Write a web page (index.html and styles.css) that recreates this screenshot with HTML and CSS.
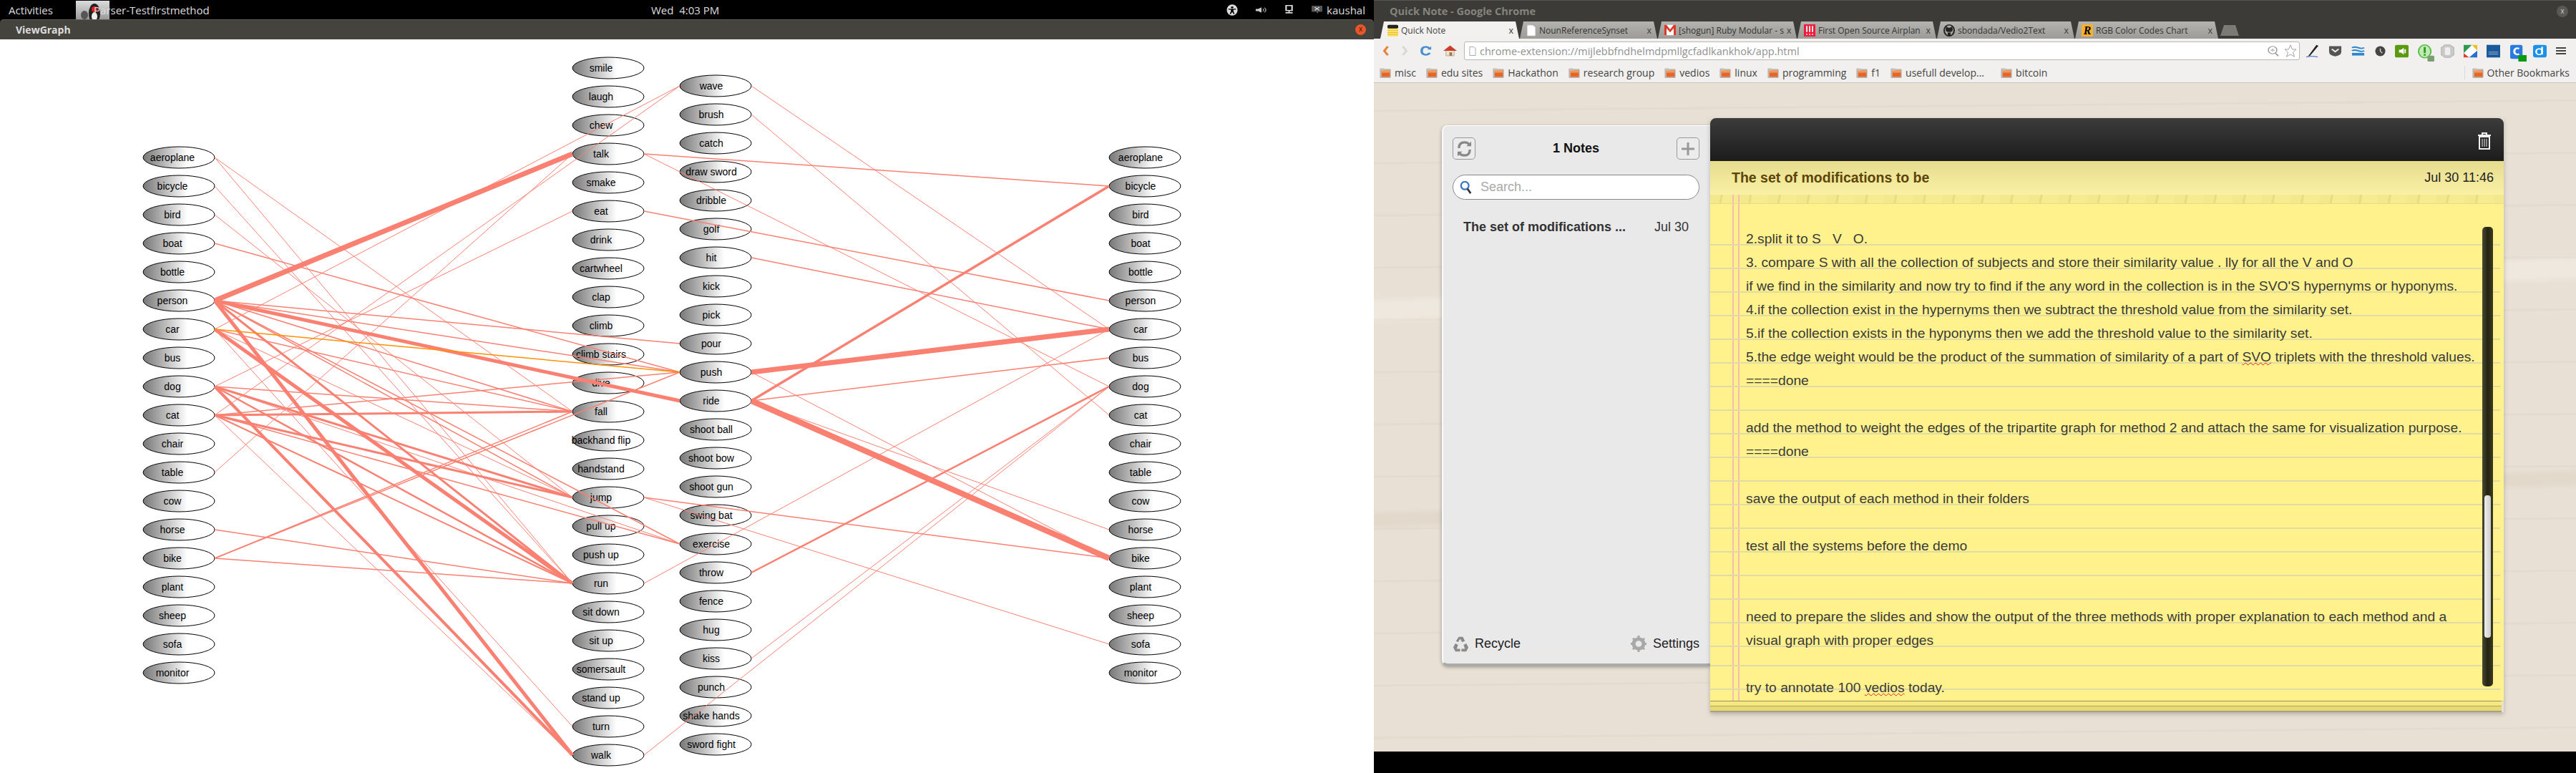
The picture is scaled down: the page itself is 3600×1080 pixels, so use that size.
FILE: index.html
```html
<!DOCTYPE html>
<html lang="en">
<head>
    <meta charset="UTF-8">
    <title>ViewGraph and Quick Note</title>
    <link rel="stylesheet" href="styles.css">
</head>
<body>
    <svg class="defs" width="0" height="0">
        <symbol id="folder" viewBox="0 0 16 20" preserveAspectRatio="none">
            <path d="M1 3h5l1 1h8v15H1z" fill="#d8d5cf" stroke="#999"/>
            <rect x="2.500" y="6" width="12" height="12" fill="#e2682a"/>
            <rect x="2.500" y="6" width="12" height="4" fill="#f09a60"/>
        </symbol>
    </svg>

    <div class="screen-left">
        <div class="top-panel">
            <span class="activities">Activities</span>
            <span class="app-icon">
                <svg width="47" height="26" viewBox="0 0 47 26">
                    <ellipse cx="26" cy="18" rx="8" ry="14" fill="#222"/>
                    <circle cx="26" cy="12" r="4" fill="#e02020"/>
                    <ellipse cx="12" cy="20" rx="5" ry="6" fill="#555"/>
                    <ellipse cx="26" cy="22" rx="4" ry="6" fill="#eee"/>
                </svg>
            </span>
            <span class="app-name">Parser-Testfirstmethod</span>
            <span class="clock">Wed&nbsp; 4:03 PM</span>
            <div class="tray">
                <svg width="16" height="16" viewBox="0 0 18 26" preserveAspectRatio="none">
                    <ellipse cx="9" cy="13" rx="8.500" ry="12.500" fill="#ddd"/>
                    <circle cx="9" cy="7" r="2" fill="#000"/>
                    <path d="M3 10h12v2h-4v4l2 6h-2l-2-5-2 5H5l2-6v-4H3z" fill="#000"/>
                </svg>
                <svg width="16" height="12" viewBox="0 0 18 26" preserveAspectRatio="none">
                    <path d="M1 10h4l5-5v16l-5-5H1z" fill="#ccc"/>
                    <path d="M12 9q3 4 0 8M14.500 6q5 7 0 14" stroke="#aaa" stroke-width="1.500" fill="none"/>
                </svg>
                <svg width="15" height="15" viewBox="0 0 18 26" preserveAspectRatio="none">
                    <rect x="4" y="3" width="10" height="12" fill="none" stroke="#ddd" stroke-width="2.500"/>
                    <rect x="8" y="15" width="2" height="5" fill="#ddd"/>
                    <rect x="3" y="19" width="12" height="3" fill="#ddd"/>
                </svg>
                <svg class="tray-chat" width="15" height="13" viewBox="0 0 14 26" preserveAspectRatio="none">
                    <path d="M0 2h14v17H9l-1 5-2-5H0z" fill="#555"/>
                    <path d="M4 6l6 9M10 6l-6 9" stroke="#ddd" stroke-width="1.500"/>
                </svg>
                <span class="user">kaushal</span>
            </div>
        </div>
        <div class="win-bar">
            <span class="win-title">ViewGraph</span>
            <span class="win-close">x</span>
        </div>
        <svg id="graph" class="graph" width="1920" height="1025" viewBox="0 55 1920 1025">
            <defs>
                <linearGradient id="nodeFill" x1="0" y1="0" x2="1" y2="0">
                    <stop offset="0" stop-color="#777"/>
                    <stop offset="0.62" stop-color="#fff"/>
                </linearGradient>
            </defs>
        </svg>
    </div>

    <div class="screen-right">
        <div class="browser">
            <div class="chrome-title">
                <span>Quick Note - Google Chrome</span>
                <span class="chrome-close">x</span>
            </div>
            <div class="tabs">
                <div class="tab tab-active tab-w1">
                    <svg width="15" height="17" viewBox="0 0 14 24" preserveAspectRatio="none">
                        <rect y="1" width="14" height="23" rx="2" fill="#fbe26a"/>
                        <rect y="1" width="14" height="7" rx="2" fill="#222"/>
                        <path d="M0 12h14M0 16h14M0 20h14" stroke="#e0b020"/>
                    </svg>
                    <span class="tab-name">Quick Note</span><span class="tab-x">x</span>
                </div>
                <div class="tab tab-w2">
                    <svg width="14" height="17" viewBox="0 0 14 22" preserveAspectRatio="none">
                        <path d="M1 1h8l4 4v16H1z" fill="#fff" stroke="#aaa"/>
                    </svg>
                    <span class="tab-name">NounReferenceSynset</span><span class="tab-x">x</span>
                </div>
                <div class="tab tab-w3">
                    <svg width="16" height="16" viewBox="0 0 16 20" preserveAspectRatio="none">
                        <rect y="1" width="16" height="18" fill="#fff"/>
                        <path d="M0 1h3l5 8 5-8h3v18h-3V7l-5 7-5-7v12H0z" fill="#d93a2b"/>
                    </svg>
                    <span class="tab-name">[shogun] Ruby Modular - s</span><span class="tab-x">x</span>
                </div>
                <div class="tab tab-w3">
                    <svg width="16" height="17" viewBox="0 0 16 22" preserveAspectRatio="none">
                        <rect width="16" height="22" fill="#ee1c3a"/>
                        <path d="M4 3v11M8 3v11M12 3v11M4 17v2M8 17v2M12 17v2" stroke="#fff" stroke-width="1.800"/>
                    </svg>
                    <span class="tab-name">First Open Source Airplan</span><span class="tab-x">x</span>
                </div>
                <div class="tab tab-w4">
                    <svg width="16" height="17" viewBox="0 0 16 22" preserveAspectRatio="none">
                        <ellipse cx="8" cy="11" rx="7" ry="10" fill="none" stroke="#222" stroke-width="2"/>
                        <path d="M3 9l1-5 3 2h2l3-2 1 5q0 5-5 5t-5-5zM6 15v6h4v-6z" fill="#222"/>
                    </svg>
                    <span class="tab-name">sbondada/Vedio2Text</span><span class="tab-x">x</span>
                </div>
                <div class="tab tab-w5">
                    <span class="fav-r">R</span>
                    <span class="tab-name">RGB Color Codes Chart</span><span class="tab-x">x</span>
                </div>
                <div class="tab tab-new"></div>
            </div>
            <div class="toolbar">
                <div class="nav-icons">
                    <svg width="10" height="16" viewBox="0 0 12 26" preserveAspectRatio="none">
                        <path d="M9 3L3 13l6 10" fill="none" stroke="#e8823a" stroke-width="4"/>
                    </svg>
                    <svg width="10" height="16" viewBox="0 0 12 26" preserveAspectRatio="none">
                        <path d="M3 3l6 10-6 10" fill="none" stroke="#d8d8d4" stroke-width="4"/>
                    </svg>
                    <svg width="16" height="16" viewBox="0 0 18 26" preserveAspectRatio="none">
                        <path d="M15 8Q12 4 9 4 2 4 2 13t7 9q3 0 6-4" fill="none" stroke="#4a90d0" stroke-width="4"/>
                        <path d="M11 10h6V3z" fill="#4a90d0"/>
                    </svg>
                    <svg width="19" height="18" viewBox="0 0 20 26" preserveAspectRatio="none">
                        <path d="M4 12h12v11H4z" fill="#eee4d0" stroke="#a98"/>
                        <path d="M0 13L10 2l10 11z" fill="#c8402a"/>
                        <rect x="9" y="16" width="4" height="7" fill="#a9744a"/>
                    </svg>
                </div>
                <div class="omnibox">
                    <svg width="10" height="15" viewBox="0 0 11 20" preserveAspectRatio="none">
                        <path d="M1 2h6l3 3v13H1z" fill="#fff" stroke="#999"/>
                    </svg>
                    <span class="url">chrome-extension://mijlebbfndhelmdpmllgcfadlkankhok/app.html</span>
                    <svg class="omni-zoom" width="16" height="15" viewBox="0 0 16 20" preserveAspectRatio="none">
                        <ellipse cx="7" cy="8" rx="6" ry="7" fill="none" stroke="#999" stroke-width="1.500"/>
                        <path d="M7 5v6M4 8h6" stroke="#999"/>
                        <path d="M11 14l4 5" stroke="#999" stroke-width="2"/>
                    </svg>
                    <svg width="18" height="18" viewBox="0 0 18 22" preserveAspectRatio="none">
                        <path d="M9 1l2.500 7.500H17l-4.500 5 2 7.500L9 17l-5.500 4 2-7.500L1 8.500h5.500z" fill="#fff" stroke="#999"/>
                    </svg>
                </div>
                <div class="ext-icons">
                    <svg width="19" height="19" viewBox="0 0 20 28" preserveAspectRatio="none">
                        <path d="M16 1L5 22l-2 4 4-3L19 3z" fill="#222"/>
                        <path d="M1 26q8-3 17 0" stroke="#5a7fd0" stroke-width="2" fill="none"/>
                    </svg>
                    <svg width="19" height="18" viewBox="0 0 20 28" preserveAspectRatio="none">
                        <path d="M1 4h18v12q0 8-9 10-9-2-9-10z" fill="#555"/>
                        <path d="M5 10l5 6 5-6" fill="none" stroke="#eee" stroke-width="2.500"/>
                    </svg>
                    <svg width="19" height="17" viewBox="0 0 20 28" preserveAspectRatio="none">
                        <path d="M1 6q4-3 9 0t9 0M1 13q4-3 9 0t9 0" fill="none" stroke="#2a86d0" stroke-width="3"/>
                        <rect x="1" y="18" width="18" height="6" fill="#2a86d0"/>
                    </svg>
                    <svg width="15" height="15" viewBox="0 0 16 28" preserveAspectRatio="none">
                        <ellipse cx="8" cy="14" rx="7.500" ry="13" fill="#444"/>
                        <path d="M8 7v7l3 5" stroke="#ddd" stroke-width="1.500" fill="none"/>
                    </svg>
                    <svg width="19" height="19" viewBox="0 0 20 28" preserveAspectRatio="none">
                        <rect y="1" width="20" height="26" rx="3" fill="#5a9a10"/>
                        <path d="M6 11h3l4-4v14l-4-4H6z" fill="#fff"/>
                        <path d="M15 10v8" stroke="#fff" stroke-width="2"/>
                    </svg>
                    <svg class="ext-badged" width="23" height="24" viewBox="0 0 24 32" preserveAspectRatio="none">
                        <ellipse cx="10" cy="13" rx="9" ry="12" fill="#bfeab0" stroke="#58b848" stroke-width="2"/>
                        <rect x="8.500" y="5" width="3" height="11" fill="#2f9a30"/>
                        <rect x="8.500" y="18" width="3" height="3" fill="#2f9a30"/>
                        <rect x="14" y="21" width="10" height="11" rx="2" fill="#7aa070"/>
                    </svg>
                    <svg width="19" height="19" viewBox="0 0 20 28" preserveAspectRatio="none">
                        <path d="M6 1h8l6 6v14l-6 6H6l-6-6V7z" fill="#c8c8c8" stroke="#aaa"/>
                        <rect x="6" y="6" width="8" height="16" rx="3" fill="#eee"/>
                    </svg>
                    <svg width="19" height="19" viewBox="0 0 20 28" preserveAspectRatio="none">
                        <rect y="1" width="20" height="26" fill="#fff"/>
                        <path d="M0 1h12L0 18z" fill="#2c9a50"/>
                        <path d="M12 1h8v12z" fill="#f0c020"/>
                        <path d="M0 27V18l8 9z" fill="#e04030"/>
                        <path d="M20 27H8l12-14z" fill="#2a6fd0"/>
                    </svg>
                    <svg width="19" height="19" viewBox="0 0 20 28" preserveAspectRatio="none">
                        <rect y="1" width="20" height="26" fill="#1a5a9a"/>
                        <path d="M3 16h14M3 20h14" stroke="#fff" stroke-opacity="0.700"/>
                    </svg>
                    <svg class="ext-badged" width="23" height="24" viewBox="0 0 24 32" preserveAspectRatio="none">
                        <rect y="1" width="18" height="26" rx="3" fill="#2a7ae0"/>
                        <path d="M13 8q-4-2-6 1-2 4 0 8 3 3 6 1" fill="none" stroke="#fff" stroke-width="3"/>
                        <rect x="12" y="20" width="12" height="12" fill="#0a9a10"/>
                    </svg>
                    <svg width="19" height="19" viewBox="0 0 20 28" preserveAspectRatio="none">
                        <rect y="1" width="20" height="26" rx="4" fill="#1a90e8"/>
                        <ellipse cx="9" cy="15" rx="4.500" ry="6" fill="none" stroke="#fff" stroke-width="2.500"/>
                        <rect x="12" y="5" width="2.500" height="16" fill="#fff"/>
                    </svg>
                    <svg class="ext-menu" width="14" height="14" viewBox="0 0 14 28" preserveAspectRatio="none">
                        <path d="M0 6h14M0 14h14M0 22h14" stroke="#444" stroke-width="4"/>
                    </svg>
                </div>
            </div>
            <div class="bookmarks">
                <span class="mark"><svg width="16" height="15"><use href="#folder"/></svg>misc</span>
                <span class="mark"><svg width="16" height="15"><use href="#folder"/></svg>edu sites</span>
                <span class="mark"><svg width="16" height="15"><use href="#folder"/></svg>Hackathon</span>
                <span class="mark"><svg width="16" height="15"><use href="#folder"/></svg>research group</span>
                <span class="mark"><svg width="16" height="15"><use href="#folder"/></svg>vedios</span>
                <span class="mark"><svg width="16" height="15"><use href="#folder"/></svg>linux</span>
                <span class="mark"><svg width="16" height="15"><use href="#folder"/></svg>programming</span>
                <span class="mark"><svg width="16" height="15"><use href="#folder"/></svg>f1</span>
                <span class="mark mark-long"><svg width="16" height="15"><use href="#folder"/></svg>usefull develop...</span>
                <span class="mark"><svg width="16" height="15"><use href="#folder"/></svg>bitcoin</span>
                <span class="mark mark-other"><svg width="16" height="15"><use href="#folder"/></svg>Other Bookmarks</span>
            </div>
            <div class="stage">
                <div class="sidebar">
                    <div class="side-head">
                        <span class="side-btn">
                            <svg width="21" height="24" viewBox="0 0 22 26" preserveAspectRatio="none">
                                <path d="M3 12q0-9 8-9 5 0 8 4M19 14q0 9-8 9-5 0-8-4" fill="none" stroke="#888" stroke-width="3.500"/>
                                <path d="M21 2v7h-7zM1 24v-7h7z" fill="#888"/>
                            </svg>
                        </span>
                        <span class="side-title">1 Notes</span>
                        <span class="side-btn">
                            <svg width="20" height="20" viewBox="0 0 20 20">
                                <path d="M10 1v18M1 10h18" stroke="#999" stroke-width="3"/>
                            </svg>
                        </span>
                    </div>
                    <div class="search">
                        <svg width="18" height="18" viewBox="0 0 20 20">
                            <ellipse cx="8" cy="7" rx="6" ry="6" fill="#fff" stroke="#3a78c0" stroke-width="2.500"/>
                            <path d="M12 12l5 7" stroke="#333" stroke-width="3"/>
                        </svg>
                        <span>Search...</span>
                    </div>
                    <div class="note-item">
                        <span class="note-name">The set of modifications ...</span>
                        <span>Jul 30</span>
                    </div>
                    <div class="side-foot">
                        <span class="foot-link">
                            <svg width="23" height="24" viewBox="0 0 24 26" preserveAspectRatio="none">
                                <path d="M9 2h6l3 6-4 2-3-5-3 5-3-2zM1 18l3-6 4 2-2 6h5v4H4zM23 18l-3-6-4 2 2 6h-5v4h7z" fill="#8a8a8a"/>
                            </svg>
                            Recycle
                        </span>
                        <span class="foot-link">
                            <svg width="24" height="25" viewBox="0 0 24 26" preserveAspectRatio="none">
                                <circle cx="12" cy="13" r="7" fill="none" stroke="#a8a8a8" stroke-width="5"/>
                                <path d="M12 1v5M12 20v5M1 13h5M18 13h5M4 5l4 4M16 17l4 4M20 5l-4 4M8 17l-4 4" stroke="#a8a8a8" stroke-width="3"/>
                            </svg>
                            Settings
                        </span>
                    </div>
                </div>
                <div class="note">
                    <div class="leather">
                        <svg width="20" height="24" viewBox="0 0 20 24">
                            <path d="M7 3V1h6v2M1 4h18M3 6h14v17H3z" fill="none" stroke="#eee" stroke-width="2"/>
                            <path d="M7 9v11M10 9v11M13 9v11" stroke="#eee"/>
                        </svg>
                    </div>
                    <div class="note-head">
                        <span class="note-title">The set of modifications to be</span>
                        <span class="note-date">Jul 30 11:46</span>
                    </div>
                    <div class="torn"></div>
                    <div class="sheet">
                        <div class="line">2.split it to S   V   O.</div>
                        <div class="line">3. compare S with all the collection of subjects and store their similarity value . lly for all the V and O</div>
                        <div class="line">if we find in the similarity and now try to find if the any word in the collection is in the SVO'S hypernyms or hyponyms.</div>
                        <div class="line">4.if the collection exist in the hypernyms then we subtract the threshold value from the similarity set.</div>
                        <div class="line">5.if the collection exists in the hyponyms then we add the threshold value to the similarity set.</div>
                        <div class="line">5.the edge weight would be the product of the summation of similarity of a part of <span class="typo">SVO</span> triplets with the threshold values.</div>
                        <div class="line">====done</div>
                        <div class="line"></div>
                        <div class="line">add the method to weight the edges of the tripartite graph for method 2 and attach the same for visualization purpose.</div>
                        <div class="line">====done</div>
                        <div class="line"></div>
                        <div class="line">save the output of each method in their folders</div>
                        <div class="line"></div>
                        <div class="line">test all the systems before the demo</div>
                        <div class="line"></div>
                        <div class="line"></div>
                        <div class="line">need to prepare the slides and show the output of the three methods with proper explanation to each method and a</div>
                        <div class="line">visual graph with proper edges</div>
                        <div class="line"></div>
                        <div class="line">try to annotate 100 <span class="typo">vedios</span> today.</div>
                        <div class="scroll-track"><div class="scroll-thumb"></div></div>
                    </div>
                    <div class="stack"></div>
                    <div class="stack stack-low"></div>
                </div>
            </div>
        </div>
    </div>
    <script src="graph.js"></script>
</body>
</html>
```

FILE: styles.css
```css
body {
    margin: 0;
    width: 3600px;
    height: 1080px;
    display: flex;
    overflow: hidden;
    background: #000;
    font-family: "Liberation Sans", Arial, sans-serif;
}
.defs {
    position: absolute;
}
.screen-left {
    width: 1920px;
    flex: none;
    display: flex;
    flex-direction: column;
}
.top-panel {
    height: 27px;
    background: #000;
    color: #ddd;
    font: 15px "Open Sans", sans-serif;
    display: flex;
    align-items: center;
    padding-left: 12px;
}
.activities {
    width: 94px;
}
.app-icon {
    width: 47px;
    height: 26px;
    background: linear-gradient(#ddd, #999);
}
.app-name {
    margin-left: -22px;
    width: 167px;
    position: relative;
    white-space: nowrap;
}
.clock {
    margin-left: 612px;
    white-space: nowrap;
}
.tray {
    margin-left: auto;
    display: flex;
    align-items: center;
    gap: 24px;
    padding-right: 12px;
}
.tray-chat {
    margin-right: -18px;
}
.win-bar {
    height: 28px;
    box-sizing: border-box;
    background: #44433e;
    border-top: 1px solid #5e5d56;
    border-radius: 5px 5px 0 0;
    color: #ddd;
    font: bold 14px "Open Sans", sans-serif;
    display: flex;
    align-items: center;
    justify-content: space-between;
    padding: 0 11px 0 22px;
}
.win-close {
    width: 15px;
    height: 15px;
    border-radius: 50%;
    background: #e8562a;
    color: #4a1808;
    font: 10px/14px "Liberation Sans", sans-serif;
    text-align: center;
}
.graph {
    display: block;
    background: #fff;
}
.graph ellipse {
    fill: url(#nodeFill);
    stroke: #000;
    stroke-width: 1;
}
.graph text {
    font: 14px "Liberation Sans", sans-serif;
    fill: #000;
    text-anchor: middle;
}
.graph line {
    stroke: #fa8072;
}
.graph line.hot {
    stroke: #ff9000;
}

.screen-right {
    width: 1680px;
    flex: none;
    height: 1050px;
}
.browser {
    height: 100%;
    display: flex;
    flex-direction: column;
}
.chrome-title {
    height: 30px;
    background: #3c3b37;
    border-top: 1px solid #55544f;
    box-sizing: border-box;
    color: #85847e;
    font: bold 14.500px "Open Sans", sans-serif;
    display: flex;
    align-items: center;
    justify-content: space-between;
    padding: 0 11px 0 22px;
}
.chrome-close {
    width: 16px;
    height: 16px;
    border-radius: 50%;
    background: #5a5955;
    color: #ccc;
    font: 10px/15px "Liberation Sans", sans-serif;
    text-align: center;
}
.tabs {
    height: 24px;
    background: #3c3b37;
    display: flex;
    padding-left: 9px;
    font: 12px "Open Sans", sans-serif;
    color: #333;
}
.tab {
    box-sizing: border-box;
    height: 24px;
    margin-right: 1px;
    padding: 0 8px 0 9px;
    display: flex;
    align-items: center;
    gap: 4px;
    background: linear-gradient(#b4b3af, #9c9b97);
    clip-path: polygon(5px 0, calc(100% - 5px) 0, 100% 100%, 0 100%);
    white-space: nowrap;
}
.tab svg {
    flex: none;
}
.tab-w1 { width: 194px; padding-left: 10px; }
.tab-w2 { width: 192px; }
.tab-w3 { width: 194px; }
.tab-w4 { width: 192px; }
.tab-w5 { width: 200px; }
.tab-active {
    background: #f2f1f0;
    color: #444;
}
.tab-name {
    flex: 1;
}
.tab-x {
    font: 13px "Liberation Sans", sans-serif;
    color: #444;
}
.tab-new {
    width: 26px;
    height: 15px;
    margin: 5px 0 0 2px;
    padding: 0;
    background: #7b7a75;
}
.fav-r {
    width: 16px;
    height: 17px;
    background: #f8b030;
    color: #000;
    font: italic bold 16px/17px "Liberation Serif", serif;
    text-align: center;
}
.toolbar {
    height: 34px;
    background: #f1f0ee;
    display: flex;
    align-items: center;
}
.nav-icons {
    width: 126px;
    flex: none;
    display: flex;
    align-items: center;
    justify-content: space-between;
    padding: 0 10px 0 12px;
    box-sizing: border-box;
}
.omnibox {
    width: 1168px;
    height: 26px;
    flex: none;
    box-sizing: border-box;
    background: #fff;
    border: 1px solid #b8b7b3;
    border-radius: 3px;
    display: flex;
    align-items: center;
    gap: 5px;
    padding: 0 3px 0 6px;
}
.url {
    color: #909090;
    font: 14.500px "Open Sans", sans-serif;
    flex: 1;
    white-space: nowrap;
}
.omni-zoom {
    margin-right: 2px;
}
.ext-icons {
    flex: 1;
    display: flex;
    align-items: center;
    justify-content: space-between;
    padding: 0 14px 0 8px;
}
.ext-badged {
    margin-right: -4px;
    margin-top: 5px;
}
.bookmarks {
    height: 28px;
    box-sizing: border-box;
    background: #f1f0ee;
    border-bottom: 1px solid #c8c6c2;
    display: flex;
    align-items: center;
    gap: 14px;
    padding-left: 8px;
    font: 14px "Open Sans", sans-serif;
    color: #444;
}
.mark {
    display: flex;
    align-items: center;
    gap: 5px;
    white-space: nowrap;
}
.mark-long {
    width: 140px;
}
.mark-other {
    margin-left: auto;
    margin-right: 9px;
    padding-left: 10px;
    border-left: 1px solid #dcdad6;
}
.stage {
    flex: 1;
    display: flex;
    padding: 49px 0 0 95px;
    background-color: #e8e0d4;
    background-image:
        linear-gradient(178deg, transparent 0 30%, rgba(255,255,255,0.250) 31% 33%, transparent 34% 60%, rgba(200,188,165,0.200) 61% 62%, transparent 63%),
        repeating-linear-gradient(179.500deg, transparent 0 37px, rgba(190,178,155,0.100) 38px 40px, transparent 41px 73px);
}
.sidebar {
    width: 375px;
    height: 755px;
    margin-top: 10px;
    flex: none;
    box-sizing: border-box;
    display: flex;
    flex-direction: column;
    background: #e9e9e9;
    border-top: 1px solid #fff;
    border-left: 2px solid #fafafa;
    border-bottom: 3px solid #aaa;
    border-radius: 8px 0 0 8px;
    box-shadow: 0 2px 5px rgba(0,0,0,0.350);
    padding: 16px 15px 14px 13px;
    color: #333;
    font-size: 18px;
}
.side-head {
    display: flex;
    align-items: center;
    justify-content: space-between;
}
.side-btn {
    width: 32px;
    height: 31px;
    box-sizing: border-box;
    border: 1px solid #999;
    border-radius: 5px;
    background: #ececec;
    display: flex;
    align-items: center;
    justify-content: center;
}
.side-title {
    color: #111;
    font-weight: bold;
}
.search {
    height: 35px;
    margin-top: 21px;
    box-sizing: border-box;
    background: #fff;
    border: 1px solid #888;
    border-radius: 18px;
    display: flex;
    align-items: center;
    gap: 11px;
    padding-left: 9px;
    color: #aaa;
}
.note-item {
    margin-top: 28px;
    padding: 0 15px;
    height: 22px;
    display: flex;
    justify-content: space-between;
    white-space: nowrap;
}
.note-name {
    font-weight: bold;
}
.side-foot {
    margin-top: auto;
    display: flex;
    justify-content: space-between;
    color: #222;
    border-bottom: 1px solid #f0e8e0;
}
.foot-link {
    display: flex;
    align-items: center;
    gap: 8px;
}
.note {
    width: 1109px;
    flex: none;
    align-self: flex-start;
    display: flex;
    flex-direction: column;
    box-shadow: 0 3px 6px rgba(0,0,0,0.220);
}
.leather {
    height: 60px;
    background: linear-gradient(#3c3c3c, #1c1c1c);
    border-radius: 8px 8px 0 0;
    display: flex;
    justify-content: flex-end;
    align-items: flex-start;
    padding: 20px 17px 0 0;
    box-sizing: border-box;
}
.note-head {
    height: 47px;
    background: linear-gradient(#e6dc8e, #fbf1a6);
    display: flex;
    justify-content: space-between;
    align-items: center;
    padding: 0 14px 0 30px;
    font-size: 18px;
}
.note-title {
    color: #5c4508;
    font-weight: bold;
    font-size: 19.500px;
}
.note-date {
    color: #222;
}
.torn {
    height: 13px;
    background:
        linear-gradient(90deg, transparent 31px, #f5bdb0 31px 33px, transparent 33px 39px, #f5bdb0 39px 41px, transparent 41px),
        repeating-linear-gradient(100deg, #f3e88c 0 14px, #e7dc80 15px 17px, #f6eb90 18px 40px);
    border-bottom: 1px solid #e8de86;
    box-sizing: border-box;
}
.sheet {
    position: relative;
    height: 695px;
    box-sizing: border-box;
    padding: 32px 0 0 50px;
    background: linear-gradient(90deg, transparent 31px, #f5bdb0 31px 33px, transparent 33px 39px, #f5bdb0 39px 41px, transparent 41px), #fff18c;
    border-right: 5px solid #fff18c;
    border-bottom: 1px solid #9a9350;
    font-size: 19.250px;
    color: #3a3a3a;
}
/* ruled lines of the pad, the pattern jumps once near the bottom */
.sheet::before {
    content: "";
    position: absolute;
    left: 0;
    right: 0;
    top: 25px;
    height: 594px;
    background: linear-gradient(transparent 31px, #e0dba4 31px) 0 0 / 100% 33px;
}
.sheet::after {
    content: "";
    position: absolute;
    left: 0;
    right: 0;
    top: 613px;
    height: 66px;
    background: linear-gradient(transparent 31px, #e0dba4 31px) 0 0 / 100% 33px;
}
.line {
    position: relative;
    z-index: 1;
    height: 33px;
    line-height: 33px;
    white-space: pre;
}
.typo {
    text-decoration: underline wavy #e02020 1px;
}
.scroll-track {
    position: absolute;
    z-index: 2;
    top: 32px;
    left: 1079px;
    width: 15px;
    height: 642px;
    background: linear-gradient(90deg, #4a4830, #24230f 50%, #3c3a22);
    border-radius: 5px;
}
.scroll-thumb {
    margin: 375px 0 0 3px;
    width: 9px;
    height: 199px;
    background: linear-gradient(90deg, #eee, #ccc);
    border-radius: 4px;
}
.stack {
    height: 6px;
    margin-right: 3px;
    background: #f5e882;
    border-bottom: 1px solid #b0a75a;
}
.stack-low {
    background: #e6da76;
    border-bottom: 2px solid #a8a080;
}
```

FILE: graph.js
```js
// bipartite-ish view: objects on both sides, verbs in the two middle columns
const NS = 'http://www.w3.org/2000/svg';
const graph = document.getElementById('graph');

const objects = ['aeroplane', 'bicycle', 'bird', 'boat', 'bottle', 'person', 'car', 'bus', 'dog', 'cat',
    'chair', 'table', 'cow', 'horse', 'bike', 'plant', 'sheep', 'sofa', 'monitor'];
const verbsA = ['smile', 'laugh', 'chew', 'talk', 'smake', 'eat', 'drink', 'cartwheel', 'clap', 'climb',
    'climb stairs', 'dive', 'fall', 'backhand flip', 'handstand', 'jump', 'pull up', 'push up', 'run',
    'sit down', 'sit up', 'somersault', 'stand up', 'turn', 'walk'];
const verbsB = ['wave', 'brush', 'catch', 'draw sword', 'dribble', 'golf', 'hit', 'kick', 'pick', 'pour',
    'push', 'ride', 'shoot ball', 'shoot bow', 'shoot gun', 'swing bat', 'exercise', 'throw', 'fence', 'hug',
    'kiss', 'punch', 'shake hands', 'sword fight'];

const columns = [
    { names: objects, x: 250, top: 220, shift: -9 },
    { names: verbsA, x: 850, top: 95, shift: -10 },
    { names: verbsB, x: 1000, top: 120, shift: -6 },
    { names: objects, x: 1600, top: 220, shift: -6 },
];

// [from column, from name, to column, to name, width]
const edges = [
    [0, 'aeroplane', 1, 'run', 1], [0, 'aeroplane', 1, 'fall', 1], [0, 'bicycle', 1, 'run', 1],
    [0, 'bird', 1, 'jump', 1], [0, 'boat', 2, 'push', 1.5],
    [0, 'person', 1, 'talk', 7], [0, 'person', 2, 'ride', 5], [0, 'person', 1, 'walk', 5],
    [0, 'person', 1, 'run', 3], [0, 'person', 2, 'pour', 1.5], [0, 'person', 2, 'push', 1.5],
    [0, 'person', 2, 'exercise', 1.5], [0, 'person', 1, 'fall', 1.5], [0, 'person', 1, 'jump', 1.5],
    [0, 'car', 1, 'run', 5], [0, 'car', 2, 'wave', 1], [0, 'car', 1, 'fall', 1.5],
    [0, 'car', 1, 'turn', 1], [0, 'car', 1, 'jump', 1],
    [0, 'dog', 1, 'walk', 4], [0, 'dog', 1, 'jump', 3], [0, 'dog', 1, 'run', 2.5],
    [0, 'dog', 1, 'fall', 1.5], [0, 'dog', 1, 'eat', 1], [0, 'dog', 2, 'exercise', 1],
    [0, 'cat', 1, 'fall', 3], [0, 'cat', 1, 'jump', 3], [0, 'cat', 1, 'run', 2],
    [0, 'cat', 1, 'walk', 1], [0, 'cat', 2, 'wave', 1], [0, 'cat', 2, 'push', 1.5],
    [0, 'cat', 2, 'exercise', 1.5],
    [0, 'table', 1, 'talk', 1], [0, 'horse', 1, 'run', 1.5], [0, 'bike', 1, 'run', 1.5],
    [0, 'bike', 1, 'fall', 1.5], [0, 'bike', 2, 'push', 1.5],
    [1, 'talk', 3, 'bicycle', 1.5], [1, 'talk', 3, 'dog', 1], [1, 'eat', 3, 'person', 1.5],
    [1, 'jump', 3, 'bike', 1.5], [1, 'jump', 3, 'sofa', 1], [1, 'run', 3, 'car', 1],
    [1, 'walk', 3, 'dog', 1],
    [2, 'wave', 3, 'car', 1], [2, 'brush', 3, 'cat', 1], [2, 'hit', 3, 'car', 1.5],
    [2, 'push', 3, 'car', 7], [2, 'push', 3, 'bike', 1], [2, 'ride', 3, 'bicycle', 3.5],
    [2, 'ride', 3, 'bus', 1.5], [2, 'ride', 3, 'bike', 8], [2, 'ride', 3, 'horse', 1],
    [2, 'throw', 3, 'dog', 2.5], [2, 'kiss', 3, 'dog', 1],
];

function make(tag, attrs, text) {
    const el = document.createElementNS(NS, tag);
    for (const key in attrs) el.setAttribute(key, attrs[key]);
    if (text) el.textContent = text;
    graph.appendChild(el);
    return el;
}

function nodeY(col, name) {
    return columns[col].top + columns[col].names.indexOf(name) * 40;
}

columns.forEach(col => {
    col.names.forEach((name, i) => {
        const y = col.top + i * 40;
        make('ellipse', { cx: col.x, cy: y, rx: 50, ry: 15 });
        make('text', { x: col.x + col.shift, y: y + 5 }, name);
    });
});

// edges go over the nodes
edges.forEach(([a, from, b, to, width]) => {
    make('line', {
        x1: columns[a].x + 50, y1: nodeY(a, from),
        x2: columns[b].x - 50, y2: nodeY(b, to),
        'stroke-width': width,
    });
});
make('line', { class: 'hot', x1: 300, y1: nodeY(0, 'car'), x2: 950, y2: nodeY(2, 'push'), 'stroke-width': 1.5 });
```
